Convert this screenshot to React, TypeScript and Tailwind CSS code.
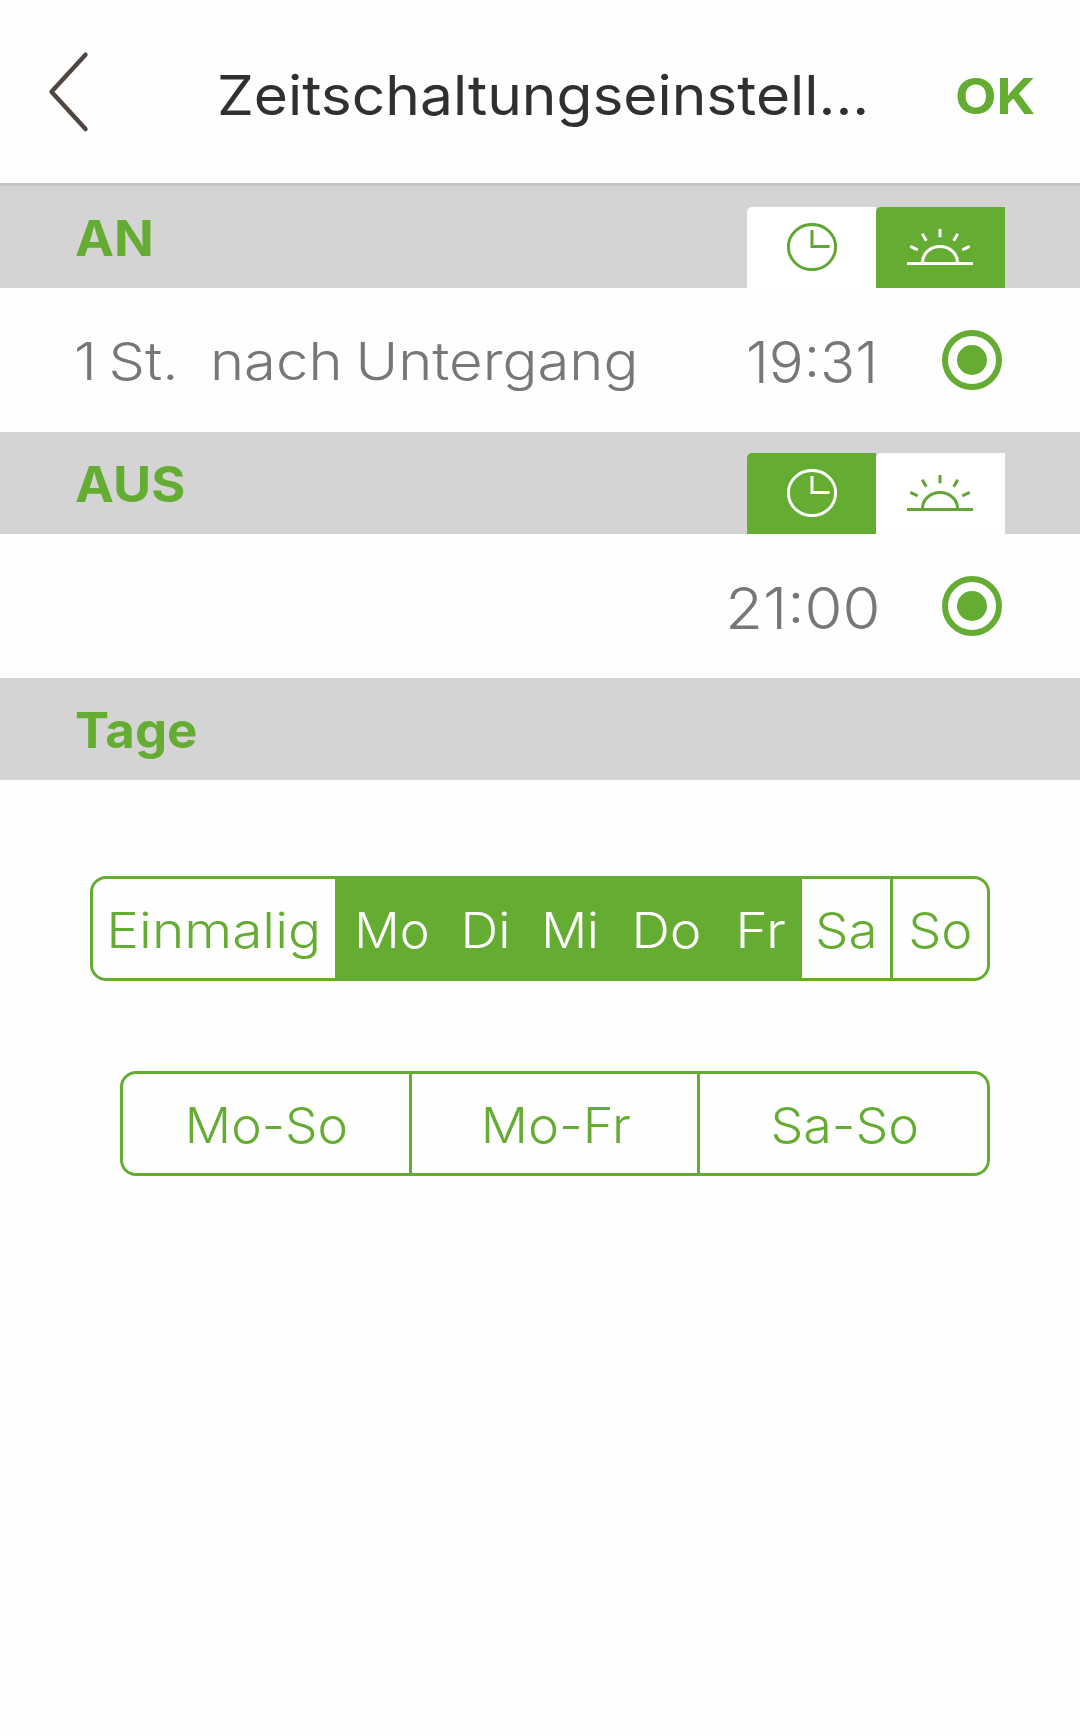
import { clsx } from 'clsx';

type Mode = 'clock' | 'sun';

const days = [
  { label: 'Einmalig', active: false, className: 'w-[242px]', text: 'scale-x-[1.11]' },
  { label: 'Mo', active: true, className: 'w-[113px]', text: 'scale-x-[1.02]' },
  { label: 'Di', active: true, className: 'w-[75px]', text: 'scale-x-[1.06]' },
  { label: 'Mi', active: true, className: 'w-[95px]', text: 'scale-x-[1.03]' },
  { label: 'Do', active: true, className: 'w-[97px]', text: 'scale-x-[1.08]' },
  { label: 'Fr', active: true, className: 'w-[87px] pl-1', text: 'scale-x-[1.12]' },
  { label: 'Sa', active: false, className: 'w-[91px] border-r-[3px]', text: 'scale-x-[1.07]' },
  { label: 'So', active: false, className: 'w-[94px]', text: 'scale-x-[1.06]' },
];

const presets = [
  { label: 'Mo-So', className: 'w-[289px] border-r-[3px]', text: 'scale-x-[1.04]' },
  { label: 'Mo-Fr', className: 'w-[288px] border-r-[3px] pl-0.5', text: 'scale-x-[1.06]' },
  { label: 'Sa-So', className: 'w-[287px] pl-0.5', text: 'scale-x-[1.05]' },
];

function ClockIcon() {
  return (
    <svg width="50" height="48" viewBox="0 0 50 48" fill="none" stroke="currentColor" strokeWidth="3">
      <ellipse cx="25" cy="24" rx="23.6" ry="22.6" />
      <path d="M25 7v16.4h17.6" />
    </svg>
  );
}

function SunIcon() {
  return (
    <svg width="66" height="36" viewBox="0 0 66 36" fill="none" stroke="currentColor" strokeWidth="3">
      <path d="M0 34.5h66" />
      <path d="M15.5 33.5a17.5 16 0 0 1 35 0" />
      <path d="M33 0v8.3M15.3 4.7l4 7M50.7 4.7l-4 7M3.3 17.3l7.4 3.5M62.7 17.3l-7.4 3.5" />
    </svg>
  );
}

function Radio() {
  return (
    <div className="flex size-[60px] items-center justify-center rounded-full border-[6px] border-[#65ac32]">
      <div className="size-[30px] rounded-full bg-[#65ac32]" />
    </div>
  );
}

function SectionHeader({ title, mode, className }: { title: string; mode?: Mode; className?: string }) {
  return (
    <div className="flex h-[102px] items-end justify-between bg-[#d4d4d4] px-[75px]">
      <h2 className={clsx('h-[100px] origin-left text-[49.5px] leading-[100px] font-bold text-[#65ac32]', className)}>
        {title}
      </h2>
      {mode && (
        <div className="flex">
          <button
            className={clsx(
              'flex h-[81px] w-[129px] justify-center rounded-tl-[5px] pt-4',
              mode === 'clock' ? 'bg-[#65ac32] text-white' : 'bg-white text-[#62a735]'
            )}
          >
            <ClockIcon />
          </button>
          <button
            className={clsx(
              'flex h-[81px] w-[129px] justify-center rounded-tl-[5px] pt-[22px] pr-px',
              mode === 'sun' ? 'bg-[#65ac32] text-white' : 'bg-white text-[#62a735]'
            )}
          >
            <SunIcon />
          </button>
        </div>
      )}
    </div>
  );
}

export default function App() {
  return (
    <div className="min-h-[1736px] w-[1080px] bg-[#fefefe] font-['Inter',sans-serif]">
      <header className="flex h-[186px] items-start border-b-[3px] border-[#c5c5c5]">
        <svg
          className="mt-[50px] ml-12 shrink-0"
          width="42"
          height="84"
          viewBox="0 0 42 84"
          fill="none"
          stroke="#4f4541"
          strokeWidth="4.4"
          strokeLinecap="round"
          strokeLinejoin="round"
        >
          <path d="M37.5 4.7 3.5 41.8l34 37.3" />
        </svg>
        <h1 className="ml-[127px] w-[738px] origin-left scale-x-[1.066] text-[55px] leading-[190px] whitespace-nowrap text-[#303030]">
          Zeitschaltungseinstell...
        </h1>
        <button className="origin-left scale-x-[1.09] text-[49.5px] leading-[192px] font-bold text-[#65ac32]">OK</button>
      </header>

      <SectionHeader title="AN" mode="sun" className="scale-x-[1.055]" />
      <div className="flex h-[144px] items-center pr-[78px] pl-[74px] font-[260] text-[#777]">
        <span className="w-[136px] origin-left scale-x-[1.11] pt-1 text-[52px] whitespace-nowrap [word-spacing:-4px]">1 St.</span>
        <span className="origin-left scale-x-[1.115] pt-1 text-[52px] whitespace-nowrap [word-spacing:-3px]">nach Untergang</span>
        <span className="mr-16 ml-auto pt-1 text-[58px]">19:31</span>
        <Radio />
      </div>

      <SectionHeader title="AUS" mode="clock" className="scale-x-[1.055]" />
      <div className="flex h-[144px] items-center justify-end pr-[78px] font-[260] text-[#777]">
        <span className="mr-[62px] origin-right scale-x-[1.06] pt-1 text-[58px]">21:00</span>
        <Radio />
      </div>

      <SectionHeader title="Tage" className="scale-x-[1.03]" />

      <div className="flex flex-col gap-[90px] pt-24 pl-[90px]">
        <div className="flex h-[105px] w-[900px] overflow-hidden rounded-2xl border-[3px] border-[#65ac32] text-[49.5px] font-[260]">
          {days.map((day) => (
            <button
              key={day.label}
              className={clsx(
                'flex items-center justify-center border-[#65ac32] pt-[3px]',
                day.active ? 'bg-[#65ac32] text-white' : 'text-[#65ac32]',
                day.className
              )}
            >
              <span className={day.text}>{day.label}</span>
            </button>
          ))}
        </div>

        <div className="ml-[30px] flex h-[105px] w-[870px] overflow-hidden rounded-2xl border-[3px] border-[#65ac32] text-[49.5px] font-[260] text-[#65ac32]">
          {presets.map((preset) => (
            <button
              key={preset.label}
              className={clsx('flex items-center justify-center border-[#65ac32] pt-[3px]', preset.className)}
            >
              <span className={preset.text}>{preset.label}</span>
            </button>
          ))}
        </div>
      </div>
    </div>
  );
}
